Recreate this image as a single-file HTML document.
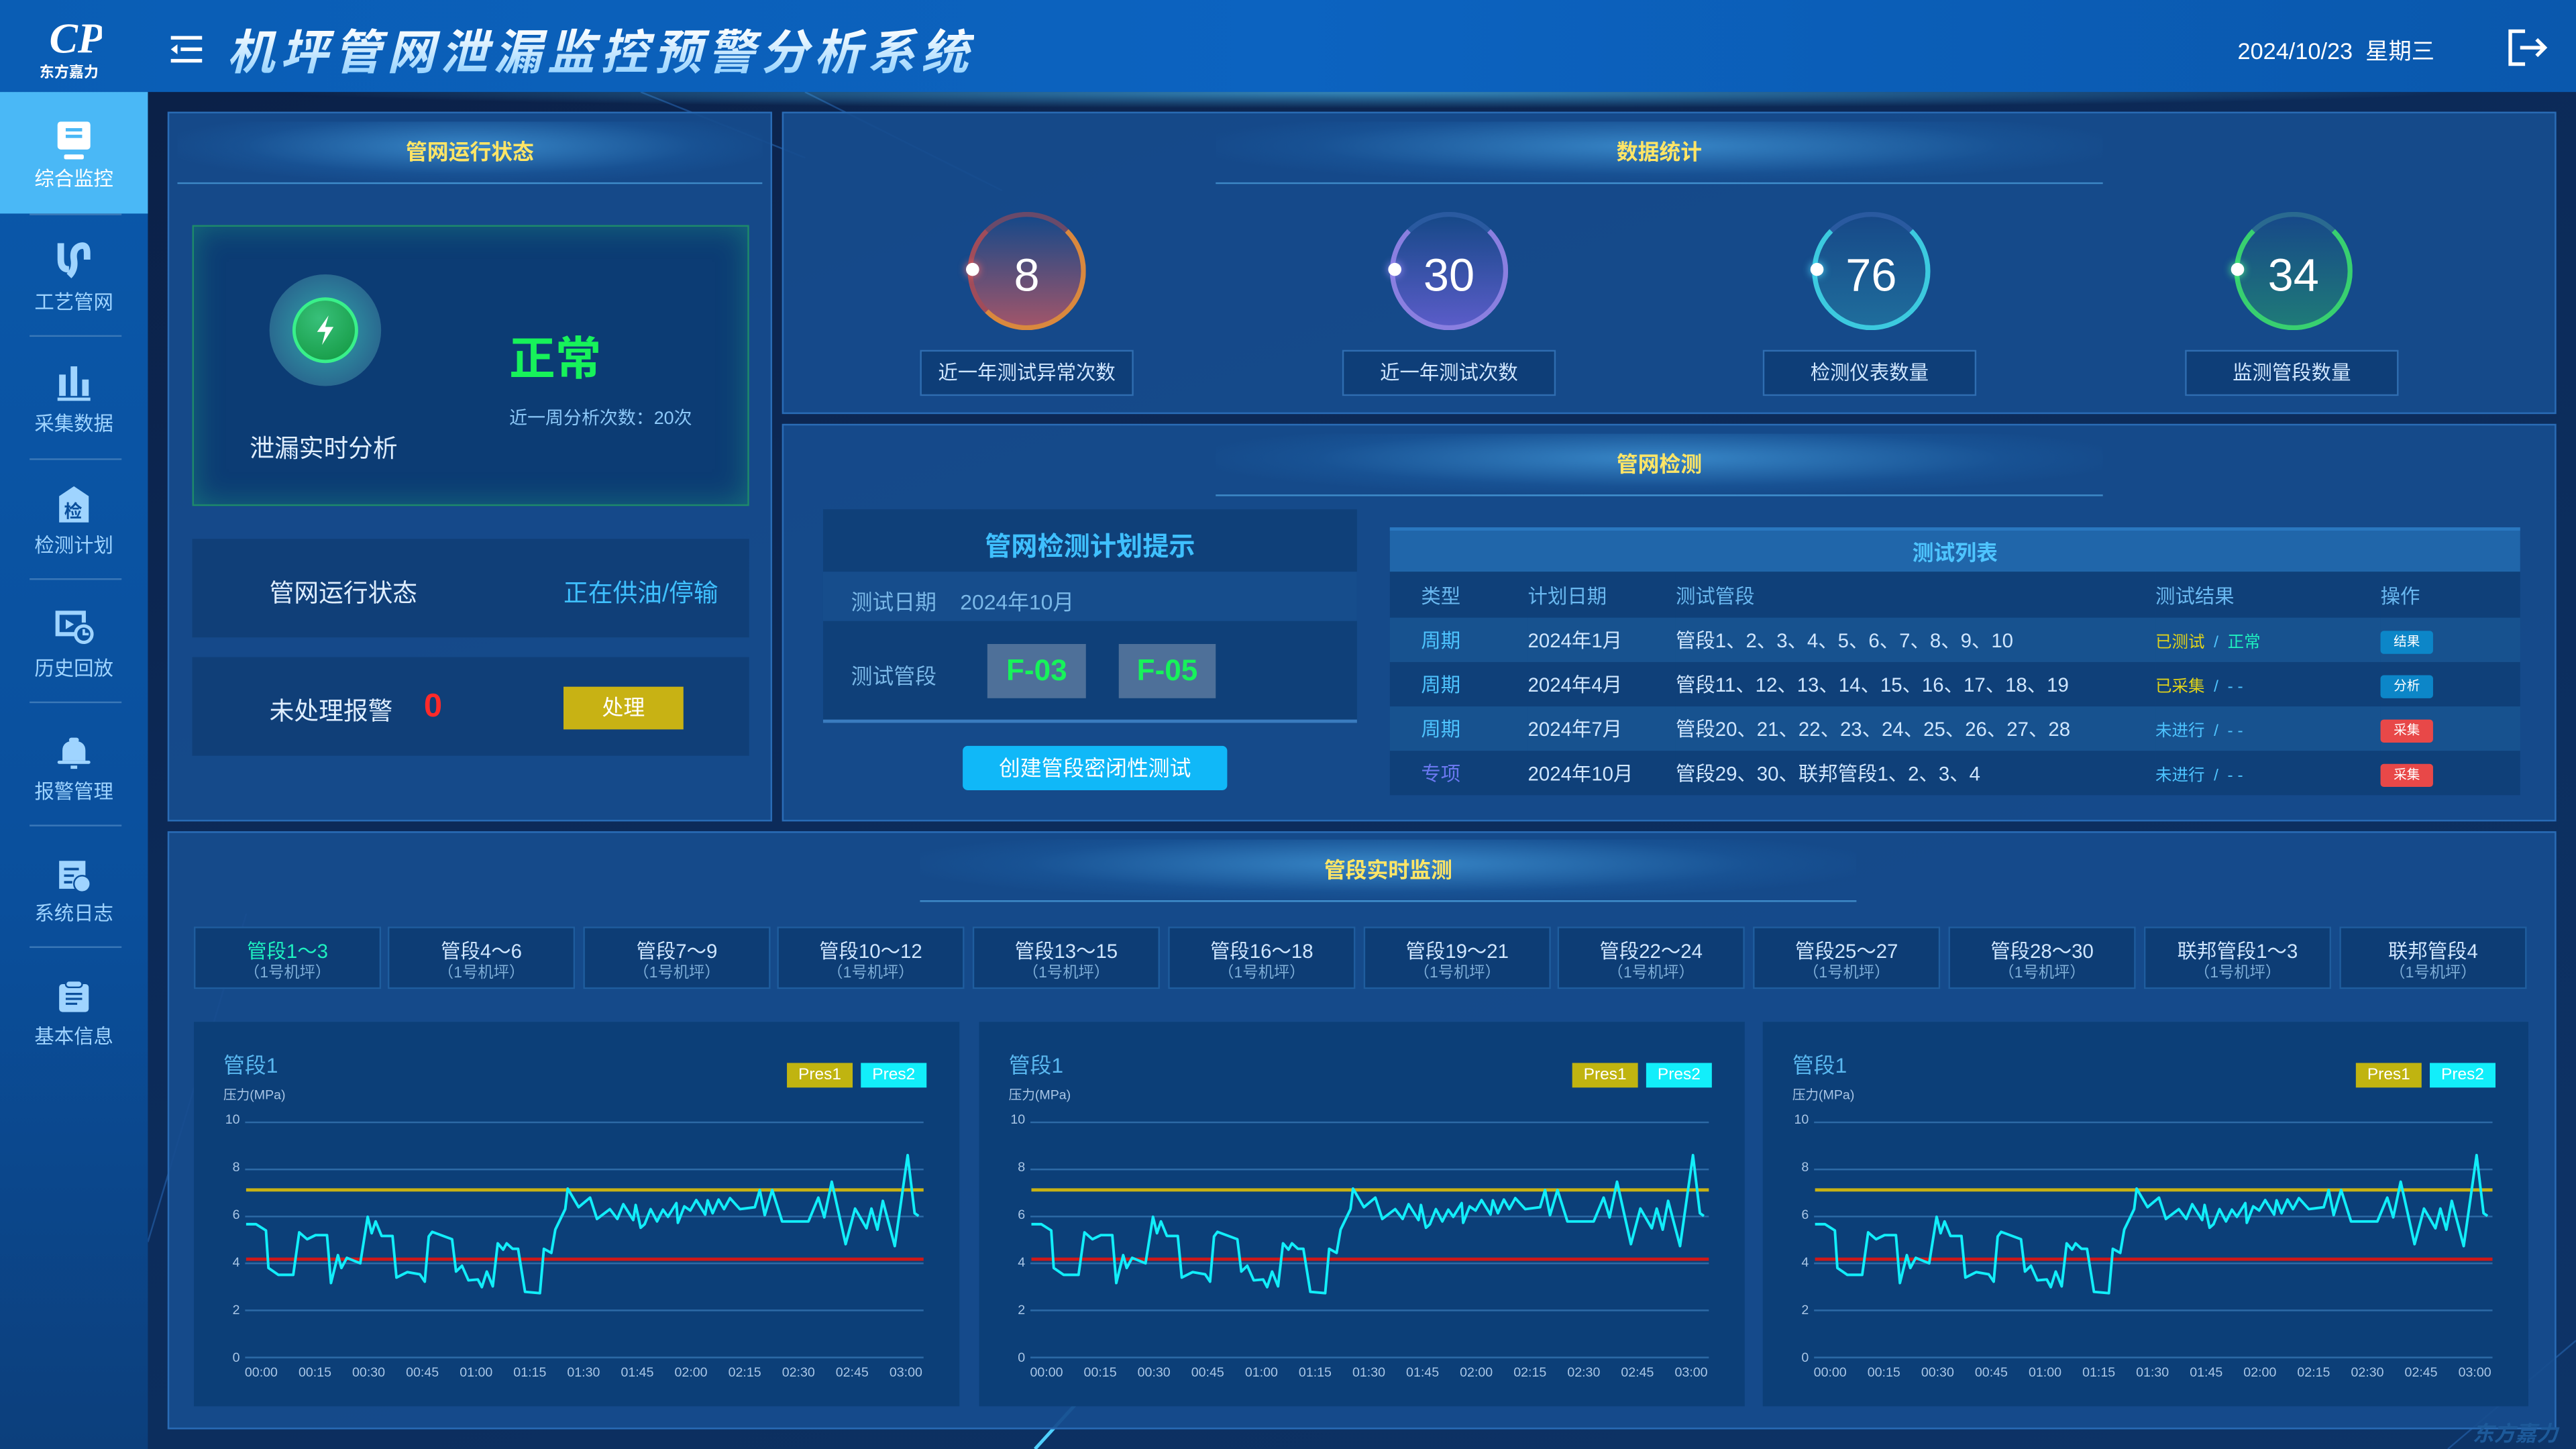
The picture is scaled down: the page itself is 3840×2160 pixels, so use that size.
<!DOCTYPE html>
<html><head><meta charset="utf-8">
<style>
*{margin:0;padding:0;box-sizing:border-box}
html,body{width:3840px;height:2160px;overflow:hidden;background:#0b2148}
#w{position:absolute;left:0;top:0;width:1568px;height:882px;transform:scale(2.44898);transform-origin:0 0;font-family:"Liberation Sans","Noto Sans CJK SC",sans-serif;color:#cfe6ff;overflow:hidden;background:linear-gradient(160deg,#0b1f45 0%,#0c2a58 40%,#0d3468 100%)}
.a{position:absolute}
.hdr{left:0;top:0;width:1568px;height:56px;background:linear-gradient(90deg,#0a5db4,#0c63c0 50%,#0a58ad)}
.side{left:0;top:56px;width:90px;height:826px;background:linear-gradient(180deg,#0a58aa,#0a4f9c 60%,#0c3f7c)}
.panel{background:rgba(23,76,142,.93);border:1px solid #2a6cb6}
.ptitle{height:38px;text-align:center;font-weight:bold;font-size:13px;color:#ffe566;line-height:38px;background:radial-gradient(ellipse at 50% 40%,rgba(70,160,225,.7),rgba(30,100,170,.3) 55%,rgba(0,0,0,0) 75%);border-bottom:1px solid rgba(90,180,240,.6)}
.nav{width:90px;text-align:center;font-size:12px;color:#9fd4ff}
.sep{left:18px;width:56px;height:1px;background:#3a78b8}
.ring{width:72px;height:72px;border-radius:50%;text-align:center;line-height:72px;font-size:28px;color:#fff}
.lbl{width:130px;height:28px;border:1px solid #2f6db0;background:#0e3e78;text-align:center;line-height:26px;font-size:12px;color:#cfe6ff}
.tab{top:564px;width:114px;height:38px;background:#0d3d75;border:1px solid #1f5d9e;text-align:center;font-size:12px;color:#cfe6ff;line-height:14px;padding-top:7px}
.tab small{display:block;font-size:9.5px;color:#7eaed8}
.chart{background:#0c3f78;width:466px;height:234px}
.yl{font-size:8px;color:#a9c6e6;width:14px;text-align:right}
.xl{font-size:8px;color:#a9c6e6}
td{font-size:12px;color:#cfe6ff;height:27px;white-space:nowrap}
.btn{display:inline-block;width:32px;height:14px;font-size:8px;line-height:14px;text-align:center;color:#fff;border-radius:2px}
.ttl{background:linear-gradient(180deg,#ffffff 20%,#8fd0ff 90%);-webkit-background-clip:text;background-clip:text;color:transparent}
</style></head><body><div id="w">
<svg class="a" style="left:90px;top:56px" width="1478" height="826"><g stroke="#2a6fc0" stroke-width="1" opacity=".5"><line x1="300" y1="0" x2="400" y2="40"/><line x1="400" y1="0" x2="520" y2="60"/><line x1="1400" y1="826" x2="1478" y2="760"/><line x1="0" y1="700" x2="60" y2="500"/></g><line x1="540" y1="826" x2="600" y2="760" stroke="#4fd0ff" stroke-width="2"/></svg>

<div class="a hdr"></div>
<svg class="a" style="left:28px;top:8px" width="34" height="28"><text x="2" y="24" font-family="Liberation Serif" font-style="italic" font-size="26" fill="#fff" font-weight="bold">CP</text></svg>
<div class="a" style="left:24px;top:37px;font-size:9px;font-weight:bold;color:#fff">东方嘉力</div>
<svg class="a" style="left:101px;top:20px" width="24" height="20"><g stroke="#fff" stroke-width="2.2"><line x1="3" y1="3" x2="22" y2="3"/><line x1="9" y1="10" x2="22" y2="10"/><line x1="3" y1="17" x2="22" y2="17"/></g><path d="M7 7 L3 10 L7 13Z" fill="#fff"/></svg>
<div class="a ttl" style="left:138px;top:9px;font-size:29px;font-weight:bold;font-style:italic;letter-spacing:3.5px;white-space:nowrap">机坪管网泄漏监控预警分析系统</div>
<div class="a" style="left:1362px;top:21px;font-size:14px;color:#fff">2024/10/23&nbsp;&nbsp;星期三</div>
<svg class="a" style="left:1525px;top:16px" width="28" height="26"><path d="M12 3H3V23H12" stroke="#fff" stroke-width="2.2" fill="none"/><path d="M9 13H24M19 8L24 13L19 18" stroke="#fff" stroke-width="2.2" fill="none"/></svg>
<div class="a" style="left:170px;top:56px;width:1330px;height:10px;background:radial-gradient(ellipse at 50% 0,rgba(80,200,255,.6),rgba(0,0,0,0) 70%)"></div>

<div class="a side"></div>
<div class="a" style="left:0;top:56px;width:90px;height:74px;background:#4ab8f6"></div>
<svg class="a" style="left:34px;top:74px" width="22" height="24"><rect x="1" y="0" width="20" height="17" rx="2" fill="#fff"/><rect x="6" y="4" width="10" height="2" fill="#4ab8f6"/><rect x="6" y="8" width="10" height="2" fill="#4ab8f6"/><rect x="5" y="20" width="12" height="3" rx="1" fill="#fff"/></svg>
<div class="a nav" style="top:100px;color:#fff">综合监控</div>
<div class="a sep" style="top:130px"></div>
<svg class="a" style="left:33px;top:146px" width="24" height="26"><path d="M4 2V12Q4 18 9 18M20 12V8Q20 2 15 4Q11 6 12 12Q13 18 9 22" stroke="#9fd4ff" stroke-width="4" fill="none"/></svg>
<div class="a nav" style="top:175px">工艺管网</div>
<div class="a sep" style="top:204px"></div>
<svg class="a" style="left:33px;top:222px" width="24" height="22"><rect x="3" y="6" width="4" height="13" fill="#9fd4ff"/><rect x="10" y="1" width="4" height="18" fill="#9fd4ff"/><rect x="17" y="9" width="4" height="10" fill="#9fd4ff"/><rect x="2" y="20" width="20" height="2" fill="#9fd4ff"/></svg>
<div class="a nav" style="top:249px">采集数据</div>
<div class="a sep" style="top:279px"></div>
<svg class="a" style="left:33px;top:295px" width="24" height="24"><path d="M12 1L21 7V23H3V7Z" fill="#9fd4ff"/><text x="6" y="20" font-size="11" fill="#0a4f9c" font-weight="bold" font-family="Noto Sans CJK SC">检</text></svg>
<div class="a nav" style="top:323px">检测计划</div>
<div class="a sep" style="top:352px"></div>
<svg class="a" style="left:32px;top:370px" width="26" height="24"><path d="M14 16H3V3H19V9" stroke="#9fd4ff" stroke-width="2.5" fill="none"/><path d="M8 7L13 10L8 13Z" fill="#9fd4ff"/><circle cx="19" cy="16" r="5" stroke="#9fd4ff" stroke-width="2" fill="#0a52a0"/><path d="M19 13V16H22" stroke="#9fd4ff" stroke-width="1.5" fill="none"/></svg>
<div class="a nav" style="top:398px">历史回放</div>
<div class="a sep" style="top:427px"></div>
<svg class="a" style="left:33px;top:446px" width="24" height="24"><path d="M5 17V11Q5 5 12 5Q19 5 19 11V17Z" fill="#9fd4ff"/><rect x="2" y="17" width="20" height="2" rx="1" fill="#9fd4ff"/><rect x="9" y="3" width="6" height="3" rx="1.5" fill="#9fd4ff"/><rect x="10" y="20" width="4" height="2" fill="#9fd4ff"/></svg>
<div class="a nav" style="top:473px">报警管理</div>
<div class="a sep" style="top:502px"></div>
<svg class="a" style="left:33px;top:522px" width="24" height="22"><rect x="3" y="2" width="16" height="17" fill="#9fd4ff"/><g stroke="#0a4f9c" stroke-width="1.5"><line x1="6" y1="7" x2="15" y2="7"/><line x1="6" y1="11" x2="12" y2="11"/><line x1="6" y1="15" x2="11" y2="15"/></g><circle cx="17" cy="16" r="5" fill="#9fd4ff" stroke="#0a4f9c" stroke-width="1"/></svg>
<div class="a nav" style="top:547px">系统日志</div>
<div class="a sep" style="top:576px"></div>
<svg class="a" style="left:34px;top:596px" width="22" height="22"><rect x="2" y="3" width="18" height="17" rx="2" fill="#9fd4ff"/><rect x="6" y="1" width="10" height="4" rx="2" fill="#9fd4ff" stroke="#0a4f9c"/><g stroke="#0a4f9c" stroke-width="1.3"><line x1="6" y1="9" x2="16" y2="9"/><line x1="6" y1="12" x2="16" y2="12"/><line x1="6" y1="15" x2="13" y2="15"/></g></svg>
<div class="a nav" style="top:622px">基本信息</div>

<div class="a panel" style="left:102px;top:68px;width:368px;height:432px"></div>
<div class="a ptitle" style="left:108px;top:74px;width:356px">管网运行状态</div>
<div class="a" style="left:117px;top:137px;width:339px;height:171px;background:#0c3c74;border:1px solid #1e8a6a;box-shadow:inset 0 0 18px rgba(40,200,140,.35)"></div>
<div class="a" style="left:164px;top:167px;width:68px;height:68px;border-radius:50%;background:radial-gradient(circle,#2d8da0 30%,#2a6a90 70%,rgba(40,110,150,.3))"></div>
<div class="a" style="left:178px;top:181px;width:40px;height:40px;border-radius:50%;background:radial-gradient(circle at 40% 30%,#38c07a,#11963e);border:2px solid #39f08a"></div>
<svg class="a" style="left:190px;top:191px" width="16" height="20"><path d="M10 1L3 11H8L6 19L13 8H8Z" fill="#fff"/></svg>
<div class="a" style="left:152px;top:262px;font-size:15px;color:#dfeeff">泄漏实时分析</div>
<div class="a" style="left:310px;top:197px;font-size:28px;font-weight:bold;color:#17f25a">正常</div>
<div class="a" style="left:310px;top:246px;font-size:11px;color:#8cc8f8">近一周分析次数：20次</div>
<div class="a" style="left:117px;top:328px;width:339px;height:60px;background:#103f78"></div>
<div class="a" style="left:164px;top:350px;font-size:15px;color:#dfeeff">管网运行状态</div>
<div class="a" style="left:343px;top:350px;font-size:15px;color:#3fc0ff">正在供油/停输</div>
<div class="a" style="left:117px;top:400px;width:339px;height:60px;background:#103f78"></div>
<div class="a" style="left:164px;top:422px;font-size:15px;color:#dfeeff">未处理报警</div>
<div class="a" style="left:258px;top:419px;font-size:20px;font-weight:bold;color:#ff2a2a">0</div>
<div class="a" style="left:343px;top:418px;width:73px;height:26px;background:#c8b214;color:#fff;font-size:13px;text-align:center;line-height:26px">处理</div>

<div class="a panel" style="left:476px;top:68px;width:1080px;height:184px"></div>
<div class="a ptitle" style="left:740px;top:74px;width:540px">数据统计</div>
<div class="a ring" style="left:589px;top:129px;border:3px solid #d9883e;border-left-color:#a04c5a;border-top-color:#6a4a6a;background:linear-gradient(180deg,rgba(30,70,130,.2),#a0556a)">8</div>
<div class="a ring" style="left:846px;top:129px;border:3px solid #8a7fe0;border-top-color:#2a5aa0;background:linear-gradient(180deg,rgba(30,70,130,.2),#5a5cc8)">30</div>
<div class="a ring" style="left:1103px;top:129px;border:3px solid #3ccadf;border-top-color:#2a5aa0;background:linear-gradient(180deg,rgba(30,70,130,.2),#1f6d9c)">76</div>
<div class="a ring" style="left:1360px;top:129px;border:3px solid #38d070;border-top-color:#2a6a90;background:linear-gradient(180deg,rgba(30,70,130,.2),#1f7a78)">34</div>
<div class="a" style="left:588px;top:160px;width:8px;height:8px;border-radius:50%;background:#fff;box-shadow:0 0 5px #ff6a6a"></div>
<div class="a" style="left:845px;top:160px;width:8px;height:8px;border-radius:50%;background:#fff;box-shadow:0 0 5px #a090ff"></div>
<div class="a" style="left:1102px;top:160px;width:8px;height:8px;border-radius:50%;background:#fff;box-shadow:0 0 5px #50e0ff"></div>
<div class="a" style="left:1358px;top:160px;width:8px;height:8px;border-radius:50%;background:#fff;box-shadow:0 0 5px #50ff90"></div>
<div class="a lbl" style="left:560px;top:213px">近一年测试异常次数</div>
<div class="a lbl" style="left:817px;top:213px">近一年测试次数</div>
<div class="a lbl" style="left:1073px;top:213px">检测仪表数量</div>
<div class="a lbl" style="left:1330px;top:213px">监测管段数量</div>

<div class="a panel" style="left:476px;top:258px;width:1080px;height:242px"></div>
<div class="a ptitle" style="left:740px;top:264px;width:540px">管网检测</div>
<div class="a" style="left:501px;top:310px;width:325px;height:130px;background:#0f4079;border-bottom:2px solid #3a7cc0"></div>
<div class="a" style="left:501px;top:319px;width:325px;text-align:center;font-size:16px;font-weight:bold;color:#3fc0ff">管网检测计划提示</div>
<div class="a" style="left:501px;top:348px;width:325px;height:30px;background:#164d8c"></div>
<div class="a" style="left:518px;top:356px;font-size:13px;color:#7ab8e8">测试日期&nbsp;&nbsp;&nbsp;&nbsp;2024年10月</div>
<div class="a" style="left:518px;top:401px;font-size:13px;color:#7ab8e8">测试管段</div>
<div class="a" style="left:601px;top:392px;width:60px;height:33px;background:#4e7099;color:#17f25a;font-size:18px;font-weight:bold;text-align:center;line-height:33px">F-03</div>
<div class="a" style="left:681px;top:392px;width:59px;height:33px;background:#4e7099;color:#17f25a;font-size:18px;font-weight:bold;text-align:center;line-height:33px">F-05</div>
<div class="a" style="left:586px;top:454px;width:161px;height:27px;background:#10b8f8;border-radius:3px;color:#fff;font-size:13px;text-align:center;line-height:27px">创建管段密闭性测试</div>
<div class="a" style="left:846px;top:321px;width:688px;height:27px;background:#2066aa;border-top:2px solid #2a78c0;text-align:center;line-height:27px;font-size:13px;font-weight:bold;color:#4ec4ff">测试列表</div>
<table class="a" style="left:846px;top:348px;width:688px;border-collapse:collapse">
<tr style="background:#0f4079;height:28px"><td style="padding-left:19px;width:84px;color:#6ab8f0">类型</td><td style="width:90px;color:#6ab8f0">计划日期</td><td style="width:292px;color:#6ab8f0">测试管段</td><td style="width:137px;color:#6ab8f0">测试结果</td><td style="color:#6ab8f0">操作</td></tr>
<tr style="background:#17528f"><td style="padding-left:19px;color:#4ec4ff">周期</td><td>2024年1月</td><td>管段1、2、3、4、5、6、7、8、9、10</td><td style="font-size:10px"><span style="color:#e0d21a">已测试</span> &nbsp;<span style="color:#4ec4ff">/</span>&nbsp; <span style="color:#1ef0c0">正常</span></td><td><span class="btn" style="background:#0c86c8">结果</span></td></tr>
<tr style="background:#0f4079"><td style="padding-left:19px;color:#4ec4ff">周期</td><td>2024年4月</td><td>管段11、12、13、14、15、16、17、18、19</td><td style="font-size:10px"><span style="color:#e0d21a">已采集</span> &nbsp;<span style="color:#4ec4ff">/ &nbsp;- -</span></td><td><span class="btn" style="background:#0c86c8">分析</span></td></tr>
<tr style="background:#17528f"><td style="padding-left:19px;color:#4ec4ff">周期</td><td>2024年7月</td><td>管段20、21、22、23、24、25、26、27、28</td><td style="font-size:10px;color:#4ec4ff">未进行 &nbsp;/ &nbsp;- -</td><td><span class="btn" style="background:#e84848">采集</span></td></tr>
<tr style="background:#0f4079"><td style="padding-left:19px;color:#6a78f0">专项</td><td>2024年10月</td><td>管段29、30、联邦管段1、2、3、4</td><td style="font-size:10px;color:#4ec4ff">未进行 &nbsp;/ &nbsp;- -</td><td><span class="btn" style="background:#e84848">采集</span></td></tr>
</table>

<div class="a panel" style="left:102px;top:506px;width:1454px;height:364px"></div>
<div class="a ptitle" style="left:560px;top:511px;width:570px">管段实时监测</div>
<div class="a tab" style="left:118px;color:#1ef0c0">管段1～3<small>（1号机坪）</small></div>
<div class="a tab" style="left:236px">管段4～6<small>（1号机坪）</small></div>
<div class="a tab" style="left:355px">管段7～9<small>（1号机坪）</small></div>
<div class="a tab" style="left:473px">管段10～12<small>（1号机坪）</small></div>
<div class="a tab" style="left:592px">管段13～15<small>（1号机坪）</small></div>
<div class="a tab" style="left:711px">管段16～18<small>（1号机坪）</small></div>
<div class="a tab" style="left:830px">管段19～21<small>（1号机坪）</small></div>
<div class="a tab" style="left:948px">管段22～24<small>（1号机坪）</small></div>
<div class="a tab" style="left:1067px">管段25～27<small>（1号机坪）</small></div>
<div class="a tab" style="left:1186px">管段28～30<small>（1号机坪）</small></div>
<div class="a tab" style="left:1305px">联邦管段1～3<small>（1号机坪）</small></div>
<div class="a tab" style="left:1424px">联邦管段4<small>（1号机坪）</small></div>

<div id="charts"></div>
<div class="a" style="left:1505px;top:862px;font-size:13px;font-weight:bold;font-style:italic;color:#1d5a9a">东方嘉力</div>
</div>
<script>
var pts="145,745 165,745 185,768 190,905 210,930 240,930 252,775 268,800 285,785 308,785 316,960 330,858 337,905 348,868 375,888 390,718 398,778 406,735 418,788 440,788 448,940 470,920 495,928 505,955 513,790 520,773 560,800 568,918 580,897 593,950 612,947 620,975 630,918 642,972 652,815 663,838 670,815 682,835 693,835 707,992 737,997 745,835 760,850 768,765 788,690 793,615 815,683 838,648 852,726 878,690 893,726 905,672 925,730 930,675 940,758 948,745 960,690 973,735 985,692 995,718 1012,668 1015,740 1028,680 1040,695 1052,657 1070,710 1075,658 1085,705 1097,655 1108,690 1120,650 1140,690 1170,683 1180,620 1190,712 1205,620 1225,735 1278,735 1298,648 1310,720 1325,590 1353,818 1372,688 1395,760 1405,688 1417,765 1428,660 1452,825 1478,493 1492,705 1500,715";
var h="";
var offs=[0,478,955];
var xs=["00:00","00:15","00:30","00:45","01:00","01:15","01:30","01:45","02:00","02:15","02:30","02:45","03:00"];
offs.forEach(function(o){
 h+='<div class="a chart" style="left:'+(118+o)+'px;top:622px"></div>';
 var g="";
 [373,545,717,888,1060,1232].forEach(function(y){g+='<line x1="143" y1="'+y+'" x2="1510" y2="'+y+'" stroke="#2d6aa6" stroke-width="1" vector-effect="non-scaling-stroke"/>';});
 g+='<line x1="145" y1="620" x2="1510" y2="620" stroke="#c8b214" stroke-width="2" vector-effect="non-scaling-stroke"/>';
 g+='<line x1="145" y1="873" x2="1510" y2="873" stroke="#d01818" stroke-width="2" vector-effect="non-scaling-stroke"/>';
 g+='<polyline points="'+pts+'" fill="none" stroke="#12eefa" stroke-width="1.6" vector-effect="non-scaling-stroke" stroke-linejoin="round"/>';
 h+='<svg class="a" style="left:'+(106.2+o)+'px;top:620.7px" width="473.7" height="261.3" viewBox="0 0 1568 1568" preserveAspectRatio="none">'+g+'</svg>';
 h+='<div class="a" style="left:'+(136+o)+'px;top:638px;font-size:13px;color:#5ab8f0">管段1</div>';
 h+='<div class="a" style="left:'+(136+o)+'px;top:661px;font-size:8px;color:#a9c6e6">压力(MPa)</div>';
 h+='<div class="a" style="left:'+(479+o)+'px;top:647px;width:40px;height:15px;background:#c0b410;color:#fff;font-size:10px;text-align:center;line-height:15px">Pres1</div>';
 h+='<div class="a" style="left:'+(524+o)+'px;top:647px;width:40px;height:15px;background:#12eefa;color:#fff;font-size:10px;text-align:center;line-height:15px">Pres2</div>';
 [10,8,6,4,2,0].forEach(function(v,i){h+='<div class="a yl" style="left:'+(132+o)+'px;top:'+(677+i*29)+'px">'+v+'</div>';});
 xs.forEach(function(t,i){h+='<div class="a xl" style="left:'+(149+o+i*32.7)+'px;top:831px">'+t+'</div>';});
});
document.getElementById("charts").innerHTML=h;
</script>
</body></html>
